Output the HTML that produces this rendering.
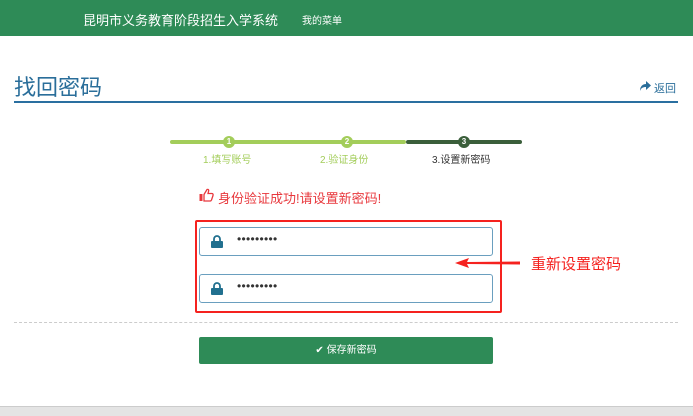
<!DOCTYPE html>
<html><head><meta charset="utf-8"><style>
*{margin:0;padding:0;box-sizing:border-box}
body{width:693px;height:416px;position:relative;background:#fff;font-family:"Liberation Sans","Noto Sans CJK SC",sans-serif;overflow:hidden}
.abs{position:absolute}
.hdr{left:0;top:0;width:693px;height:36px;background:#2e8b57}
.inp{left:199px;width:294px;height:29px;border:1px solid #6a9fbf;border-radius:3px;background:#fff}
.lock{left:11px;top:7px}
.dots{left:37px;top:4px;font-size:12px;color:#333;letter-spacing:0.3px}
.step{top:140px;height:4px}
.c{width:12px;height:12px;border-radius:6px;top:136px;color:#fff;font-size:8px;font-weight:bold;text-align:center;line-height:12px}
.lbl{top:151px;font-size:10px}
</style></head><body>
<div class="abs hdr"></div>
<div class="abs" style="left:83px;top:10px;color:#fff;font-size:13px">昆明市义务教育阶段招生入学系统</div>
<div class="abs" style="left:302px;top:12px;color:#fff;font-size:10px">我的菜单</div>
<div class="abs" style="left:14px;top:70px;color:#2a6e9a;font-size:22px">找回密码</div>
<svg class="abs" style="left:639px;top:81px" width="12" height="10" viewBox="0 0 12 10"><path d="M1 10C1 5 4 3 7 3V0L12 4.5L7 9V6C4 6 2 7 1 10Z" fill="#2a6e9a"/></svg>
<div class="abs" style="left:654px;top:80px;color:#2a6e9a;font-size:11px">返回</div>
<div class="abs" style="left:14px;top:101px;width:664px;height:2px;background:#2a6fa0"></div>
<div class="abs step" style="left:170px;width:236px;background:#a3cd5a;border-radius:2px"></div>
<div class="abs step" style="left:406px;width:116px;background:#3a5e3a;border-radius:2px"></div>
<div class="abs c" style="left:223px;background:#a3cd5a">1</div>
<div class="abs c" style="left:341px;background:#a3cd5a">2</div>
<div class="abs c" style="left:458px;background:#3a5e3a">3</div>
<div class="abs lbl" style="left:203px;color:#a3cd5a">1.填写账号</div>
<div class="abs lbl" style="left:320px;color:#a3cd5a">2.验证身份</div>
<div class="abs lbl" style="left:432px;color:#333">3.设置新密码</div>
<svg class="abs" style="left:199px;top:188px" width="15" height="14" viewBox="0 0 15 14"><rect x="0.5" y="6" width="3" height="7" fill="#e8383d"/><path d="M5 6.5L8 1.5C9.5 1 10 2 9.5 3.5L9 5.5H13C14 5.5 14.3 6.5 14 7.5L12.5 12C12.2 12.7 11.8 13 11 13H5Z" fill="none" stroke="#e8383d" stroke-width="1.3"/></svg>
<div class="abs" style="left:218px;top:188px;color:#e8383d;font-size:13px">身份验证成功!请设置新密码!</div>
<div class="abs" style="left:195px;top:220px;width:307px;height:93px;border:2px solid #f5221f;border-radius:2px"></div>
<div class="abs inp" style="top:227px">
<svg class="abs lock" width="12" height="13" viewBox="0 0 12 13"><path d="M3 6V4a3 3 0 0 1 6 0v2" fill="none" stroke="#21708f" stroke-width="1.8"/><rect x="0" y="6" width="12" height="7" rx="1" fill="#21708f"/></svg>
<div class="abs dots">•••••••••</div></div>
<div class="abs inp" style="top:274px">
<svg class="abs lock" width="12" height="13" viewBox="0 0 12 13"><path d="M3 6V4a3 3 0 0 1 6 0v2" fill="none" stroke="#21708f" stroke-width="1.8"/><rect x="0" y="6" width="12" height="7" rx="1" fill="#21708f"/></svg>
<div class="abs dots">•••••••••</div></div>
<svg class="abs" style="left:455px;top:257px" width="70" height="12"><path d="M0 6L14 1L12 5L65 4.5L65 7.5L12 7L14 11Z" fill="#f5221f"/></svg>
<div class="abs" style="left:531px;top:253px;color:#f5221f;font-size:15px">重新设置密码</div>
<div class="abs" style="left:14px;top:322px;width:664px;border-top:1px dashed #ccc"></div>
<div class="abs" style="left:199px;top:337px;width:294px;height:27px;background:#2e8b57;border-radius:2px;color:#fff;font-size:10px;text-align:center;line-height:27px">✔ 保存新密码</div>
<div class="abs" style="left:0;top:406px;width:693px;height:10px;background:#e4e4e4;border-top:1px solid #ccc"></div>
</body></html>
